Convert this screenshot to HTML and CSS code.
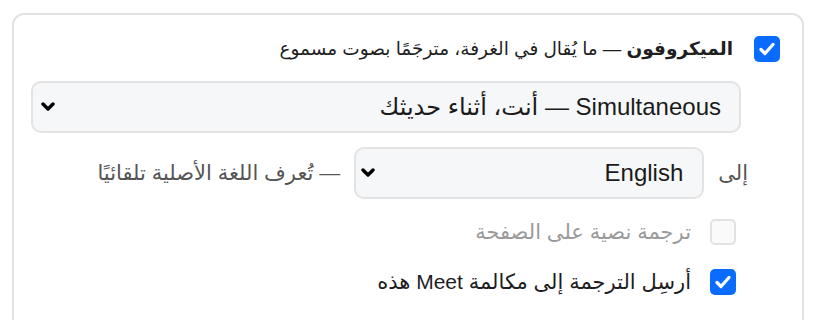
FILE: index.html
```html
<!DOCTYPE html>
<html lang="ar" dir="rtl">
<head>
<meta charset="utf-8">
<link rel="stylesheet" href="styles.css">
</head>
<body>
<div class="card">
  <div class="row main-row">
    <span class="cb checked"><svg viewBox="0 0 26 26" width="26" height="26"><path d="M7 13.5 L11 17.5 L19 8.5" fill="none" stroke="#fff" stroke-width="3.2" stroke-linecap="round" stroke-linejoin="round"/></svg></span>
    <span class="label title"><b>الميكروفون</b> — ما يُقال في الغرفة، مترجَمًا بصوت مسموع</span>
  </div>
  <div class="nested">
    <div class="select select-wide">
      <span class="sel-text">Simultaneous — أنت، أثناء حديثك</span>
      <svg class="chev" viewBox="0 0 14 10" width="14" height="10"><path d="M2 2 L7 7 L12 2" fill="none" stroke="#000" stroke-width="3.4" stroke-linecap="round" stroke-linejoin="round"/></svg>
    </div>
    <div class="lang-row">
      <span class="to">إلى</span>
      <div class="select select-lang">
        <span class="sel-text">English</span>
        <svg class="chev" viewBox="0 0 14 10" width="14" height="10"><path d="M2 2 L7 7 L12 2" fill="none" stroke="#000" stroke-width="3.4" stroke-linecap="round" stroke-linejoin="round"/></svg>
      </div>
      <span class="hint">— تُعرف اللغة الأصلية تلقائيًا</span>
    </div>
    <div class="row sub-row">
      <span class="cb disabled"></span>
      <span class="label muted">ترجمة نصية على الصفحة</span>
    </div>
    <div class="row sub-row">
      <span class="cb checked"><svg viewBox="0 0 26 26" width="26" height="26"><path d="M7 13.5 L11 17.5 L19 8.5" fill="none" stroke="#fff" stroke-width="3.2" stroke-linecap="round" stroke-linejoin="round"/></svg></span>
      <span class="label">أرسِل الترجمة إلى مكالمة Meet هذه</span>
    </div>
    <div class="row sub-row last-row">
      <span class="cb disabled"></span>
      <span class="label">اسمع الترجمة في سماعاتك أثناء المكالمة</span>
    </div>
  </div>
</div>
</body>
</html>
```
FILE: styles.css
```css
html, body {
  margin: 0;
  padding: 0;
  background: #ffffff;
}
body {
  font-family: "Liberation Sans", "DejaVu Sans", sans-serif;
  color: #1d1d1f;
  overflow: hidden;
  height: 320px;
}
.card {
  margin: 13px 12px 0 12px;
  border: 2px solid #e2e2e2;
  border-radius: 12px;
  padding: 19px 22px 40px 17px;
}
.row {
  display: flex;
  align-items: center;
  height: 30px;
}
.main-row {
  gap: 21px;
  font-size: 18.5px;
}
.title {
  color: #1f1f1f;
}
.main-row b {
  font-weight: 700;
}
.cb {
  flex: none;
  width: 26px;
  height: 26px;
  box-sizing: border-box;
  border-radius: 5px;
  display: flex;
  align-items: center;
  justify-content: center;
}
.cb.checked {
  background: #0a6cfe;
}
.cb.disabled {
  background: #fafafa;
  border: 2px solid #e2e2e2;
}
.label {
  white-space: nowrap;
}
.nested {
  margin-right: 32px;
  padding-top: 17px;
}
.select {
  display: flex;
  align-items: center;
  justify-content: space-between;
  box-sizing: border-box;
  background: #f6f7f9;
  border: 2px solid #e3e3e3;
  border-radius: 10px;
  font-size: 24px;
  color: #1a1a1a;
}
.select-wide {
  margin-right: 7px;
  height: 52px;
  padding: 0 18px 0 8px;
}
.select-lang {
  width: 350px;
  height: 52px;
  padding: 0 19px 0 5px;
}
.chev {
  flex: none;
}
.lang-row {
  display: flex;
  align-items: center;
  gap: 14px;
  margin-top: 14px;
  font-size: 21px;
}
.to {
  color: #555;
}
.hint {
  color: #555;
  white-space: nowrap;
}
.sub-row {
  margin-right: 12px;
  gap: 19px;
  font-size: 21px;
  margin-top: 20px;
}
.lang-row + .sub-row {
  margin-top: 18px;
}
.sub-row.last-row {
  margin-top: 25px;
}
.muted {
  color: #9a9a9a;
}
```
